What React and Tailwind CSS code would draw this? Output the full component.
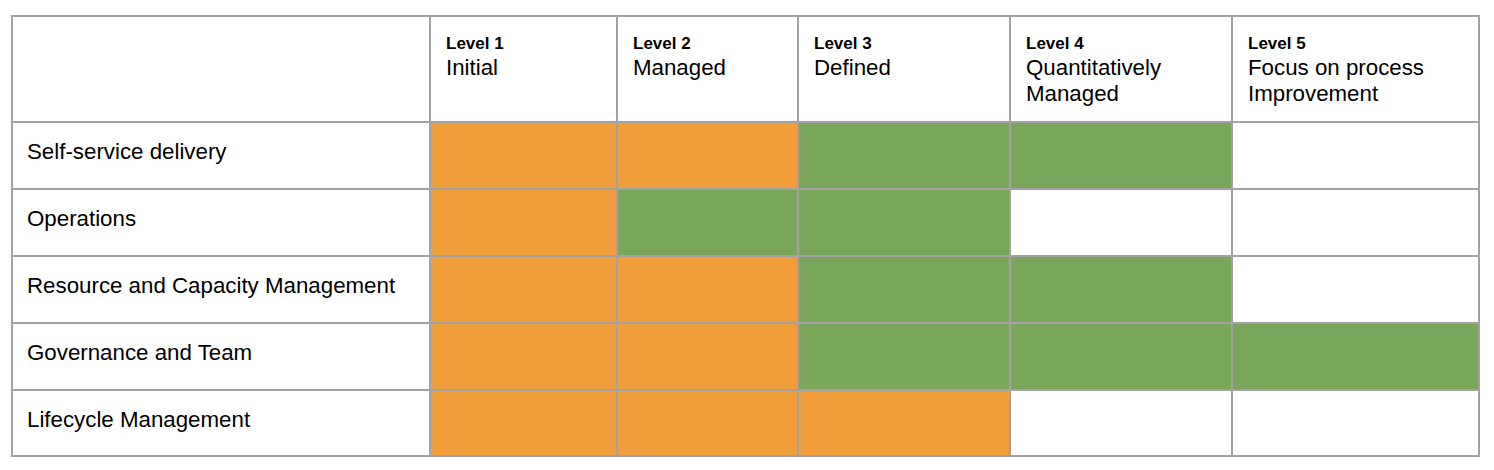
import React from 'react';

const LEVELS = [
    { level: 'Level 1', name: ['Initial'] },
    { level: 'Level 2', name: ['Managed'] },
    { level: 'Level 3', name: ['Defined'] },
    { level: 'Level 4', name: ['Quantitatively', 'Managed'] },
    { level: 'Level 5', name: ['Focus on process', 'Improvement'] },
];

// o = orange, g = green, w = empty
const ROWS = [
    { label: 'Self-service delivery', cells: ['o', 'o', 'g', 'g', 'w'] },
    { label: 'Operations', cells: ['o', 'g', 'g', 'w', 'w'] },
    { label: 'Resource and Capacity Management', cells: ['o', 'o', 'g', 'g', 'w'] },
    { label: 'Governance and Team', cells: ['o', 'o', 'g', 'g', 'g'] },
    { label: 'Lifecycle Management', cells: ['o', 'o', 'o', 'w', 'w'] },
];

const fillClass = {
    o: 'bg-[#f09e3b]',
    g: 'bg-[#7aa65c]',
    w: 'bg-white',
};

const App = () => {
    return (
        <div className="min-h-[470px] w-full bg-white pl-[11px] pt-[15px] font-['Liberation_Sans',Arial,sans-serif] text-black">
            <div className="grid w-max grid-cols-[418px_187px_181px_212px_222px_247px] border-l-2 border-t-2 border-[#a2a2a2]">
                {/* header row */}
                <div className="h-[106px] border-b-2 border-r-2 border-[#a2a2a2] bg-white" />
                {LEVELS.map((l) => (
                    <div key={l.level} className="h-[106px] border-b-2 border-r-2 border-[#a2a2a2] bg-white pl-[15px] pt-[16px]">
                        <div className="text-[17px] font-bold leading-[22px]">{l.level}</div>
                        {l.name.map((line) => (
                            <div key={line} className="whitespace-nowrap text-[22.3px] leading-[26px]">{line}</div>
                        ))}
                    </div>
                ))}

                {ROWS.map((row, i) => (
                    <React.Fragment key={row.label}>
                        <div className={`${i === ROWS.length - 1 ? 'h-[66px]' : 'h-[67px]'} border-b-2 border-r-2 border-[#a2a2a2] bg-white pl-[14px] pt-[16px] text-[22.3px] leading-[25px]`}>
                            {row.label}
                        </div>
                        {row.cells.map((c, j) => (
                            <div key={j} className={`${i === ROWS.length - 1 ? 'h-[66px]' : 'h-[67px]'} border-b-2 border-r-2 border-[#a2a2a2] ${fillClass[c]}`} />
                        ))}
                    </React.Fragment>
                ))}
            </div>
        </div>
    );
};

export default App;
